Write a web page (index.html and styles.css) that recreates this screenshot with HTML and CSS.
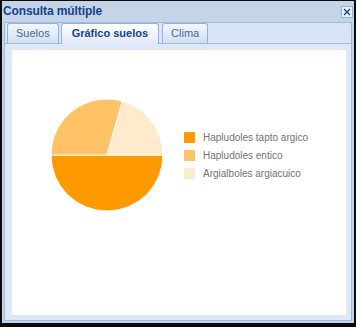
FILE: index.html
```html
<!DOCTYPE html>
<html lang="es">
<head>
    <meta charset="UTF-8">
    <title>Consulta múltiple</title>
    <link rel="stylesheet" href="styles.css">
</head>
<body>
    <div class="win">
        <div class="win-header">
            <span class="win-title">Consulta múltiple</span>
            <span class="win-close">
                <svg width="12" height="12" viewBox="0 0 12 12">
                    <rect x="0.5" y="0.5" width="11" height="11" fill="#eef3fa" stroke="#8db2e3"/>
                    <path d="M3 3 L9 9 M9 3 L3 9" stroke="#15428b" stroke-width="1.4"/>
                </svg>
            </span>
        </div>
        <div class="tabpanel">
            <ul class="tab-strip">
                <li class="tab">Suelos</li>
                <li class="tab active">Gráfico suelos</li>
                <li class="tab">Clima</li>
            </ul>
            <div class="tab-body">
                <div class="chart">
                    <svg class="pie" width="114" height="114" viewBox="0 0 114 114">
                        <path d="M57 57 L113 57 A56 56 0 0 1 1 57 Z" fill="#ff9900" stroke="#fff" stroke-width="1"/>
                        <path d="M57 57 L1 57 A56 56 0 0 1 72.4 3.2 Z" fill="#ffc266" stroke="#fff" stroke-width="1"/>
                        <path d="M57 57 L72.4 3.2 A56 56 0 0 1 113 57 Z" fill="#ffebcc" stroke="#fff" stroke-width="1"/>
                    </svg>
                    <ul class="legend">
                        <li><span class="swatch dark"></span>Hapludoles tapto argico</li>
                        <li><span class="swatch mid"></span>Hapludoles entico</li>
                        <li><span class="swatch light"></span>Argialboles argiacuico</li>
                    </ul>
                </div>
            </div>
        </div>
    </div>
</body>
</html>
```

FILE: styles.css
```css
html, body {
    margin: 0;
    height: 100%;
}

body {
    background: #000;
    font-family: "Liberation Sans", Arial, sans-serif;
}

.win {
    box-sizing: border-box;
    width: 356px;
    height: 327px;
    border: 2px solid #0a0a0a;
    border-top-width: 1px;
    border-bottom-width: 4px;
    background: #c6d4e7;
    padding: 0 2px 2px;
    display: flex;
    flex-direction: column;
}

.win-header {
    height: 21px;
    box-sizing: border-box;
    padding-bottom: 2px;
    margin: 0 -1px;
    display: flex;
    align-items: center;
    justify-content: space-between;
}

.win-title {
    font-size: 12px;
    font-weight: bold;
    color: #15428b;
    letter-spacing: -0.1px;
}

.win-close {
    display: flex;
    margin-top: 2px;
}

.tabpanel {
    flex: 1;
    border: 1px solid #99bbe8;
    background: #dfe8f6;
    display: flex;
    flex-direction: column;
}

.tab-strip {
    list-style: none;
    margin: 0;
    padding: 0 0 0 2px;
    height: 20px;
    display: flex;
    align-items: flex-start;
    gap: 2px;
    background: #d9e4f4;
    border-bottom: 1px solid #99bbe8;
}

.tab {
    box-sizing: border-box;
    height: 20px;
    padding: 0 8px;
    border: 1px solid #8db2e3;
    border-bottom: none;
    border-radius: 3px 3px 0 0;
    background: linear-gradient(#f3f7fc, #d2dff0);
    color: #416aa3;
    font-size: 11px;
    line-height: 19px;
}

.tab.active {
    height: 21px;
    padding: 0 10px;
    margin-right: 1px;
    background: linear-gradient(#ffffff, #dfe8f6);
    color: #15428b;
    font-weight: bold;
}

.tab-body {
    flex: 1;
    padding: 6px 5px 5px 7px;
    display: flex;
}

.chart {
    flex: 1;
    background: #fff;
    display: flex;
    align-items: flex-start;
    padding: 48px 0 0 38px;
    box-sizing: border-box;
    height: 265px;
}

.pie {
    display: block;
}

.legend {
    list-style: none;
    margin: 30px 0 0 20px;
    padding: 0;
    font-size: 10px;
    color: #727272;
}

.legend li {
    height: 18px;
    display: flex;
    align-items: center;
    gap: 8px;
}

.swatch {
    width: 11px;
    height: 11px;
}

.swatch.dark {
    background: #ff9900;
}

.swatch.mid {
    background: #ffc266;
}

.swatch.light {
    background: #ffebcc;
}
```
